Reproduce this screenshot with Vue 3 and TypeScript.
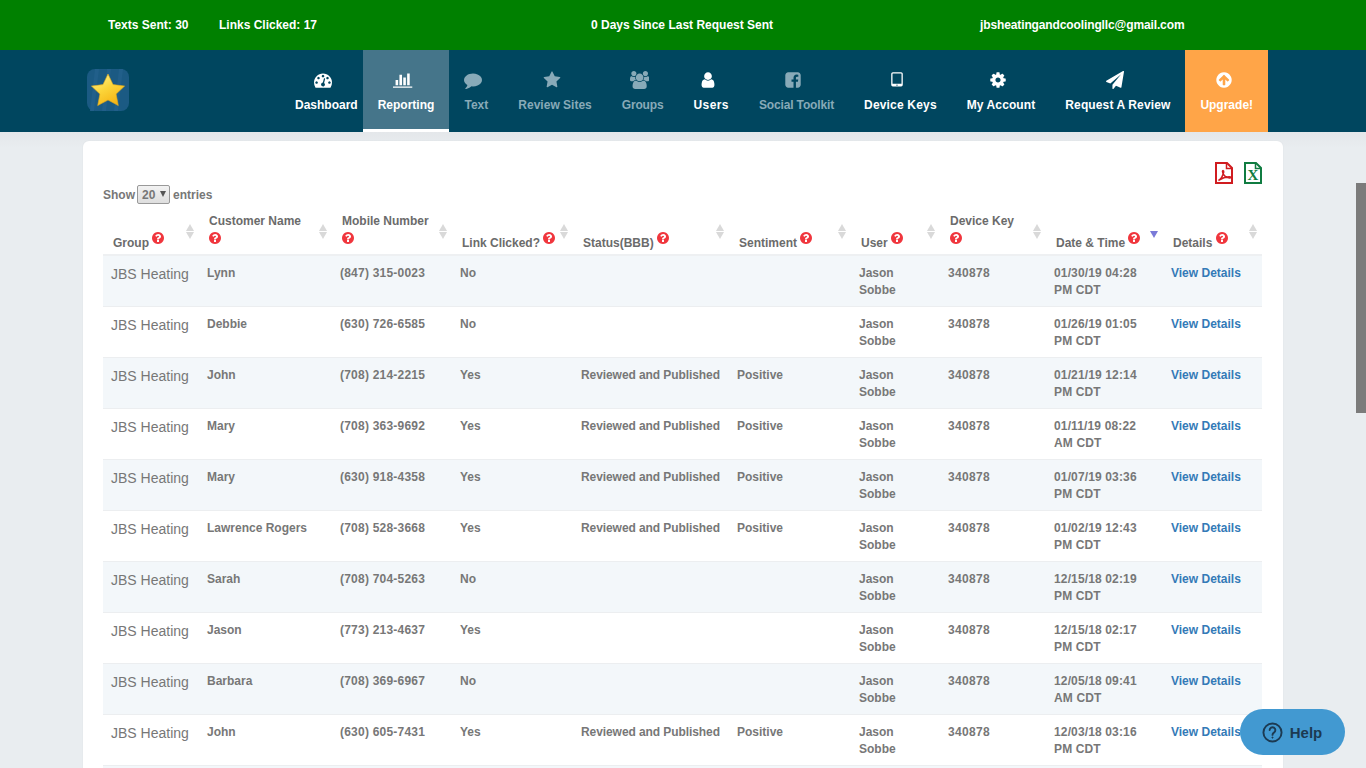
<script setup lang="ts">
interface NavItem { label: string; viewBox: string; d: string; dim?: boolean; active?: boolean; upgrade?: boolean; first?: boolean; track?: number }
const nav: NavItem[] = [
  { label: 'Dashboard', first: true, viewBox: '0 0 1792 1792', d: 'M384 1152q0-53-37.5-90.5t-90.5-37.5-90.5 37.5-37.5 90.5 37.5 90.5 90.5 37.5 90.5-37.5 37.5-90.5zm192-448q0-53-37.5-90.5t-90.5-37.5-90.5 37.5-37.5 90.5 37.5 90.5 90.5 37.5 90.5-37.5 37.5-90.5zm428 481l101-382q6-26-7.5-48.5t-38.5-29.5-48 6.5-30 39.5l-101 382q-60 5-107 43.5t-63 98.5q-20 77 20 146t117 89 146-20 89-117q16-60-6-117t-72-91zm660-33q0-53-37.5-90.5t-90.5-37.5-90.5 37.5-37.5 90.5 37.5 90.5 90.5 37.5 90.5-37.5 37.5-90.5zm-640-640q0-53-37.5-90.5t-90.5-37.5-90.5 37.5-37.5 90.5 37.5 90.5 90.5 37.5 90.5-37.5 37.5-90.5zm448 192q0-53-37.5-90.5t-90.5-37.5-90.5 37.5-37.5 90.5 37.5 90.5 90.5 37.5 90.5-37.5 37.5-90.5zm320 448q0 261-141 483-19 29-54 29h-1402q-35 0-54-29-141-221-141-483 0-182 71-348t191-286 286-191 348-71 348 71 286 191 191 286 71 348z' },
  { label: 'Reporting', active: true, viewBox: '0 0 2048 1792', d: 'M512 896v512h-256v-512h256zm384-512v1024h-256v-1024h256zm1024 1152v128h-2048v-1536h128v1408h1920zm-640-896v768h-256v-768h256zm384-384v1152h-256v-1152h256z' },
  { label: 'Text', dim: true, viewBox: '0 0 1792 1792', d: 'M1792 896q0 174-120 321.5t-326 233-450 85.5q-70 0-145-8-198 175-460 242-49 14-114 22-17 2-30.5-9t-17.5-29v-1q-3-4-.5-12t2-10 4.5-9.5l6-9 7-8.5 8-9q7-8 31-34.5t34.5-38 31-39.5 32.5-51 27-59 26-76q-157-89-247.5-220t-90.5-281q0-130 71-248.5t191-204.5 286-136.5 348-50.5q244 0 450 85.5t326 233 120 321.5z' },
  { label: 'Review Sites', dim: true, viewBox: '0 0 1792 1792', d: 'M1728 647q0 22-26 48l-363 354 86 500q1 7 1 20 0 21-10.5 35.5t-30.5 14.5q-19 0-40-12l-449-236-449 236q-22 12-40 12-21 0-31.5-14.5t-10.5-35.5q0-6 2-20l86-500-364-354q-25-27-25-48 0-37 56-46l502-73 225-455q19-41 49-41t49 41l225 455 502 73q56 9 56 46z' },
  { label: 'Groups', track: -0.15, dim: true, viewBox: '0 0 1920 1792', d: 'M593 896q-162 5-265 128h-134q-82 0-138-40.5t-56-118.5q0-353 124-353 6 0 43.5 21t97.5 42.5 119 21.5q67 0 133-23-5 37-5 66 0 139 81 256zm1071 637q0 120-73 189.5t-194 69.5h-874q-121 0-194-69.5t-73-189.5q0-53 3.5-103.5t14-109 26.5-108.5 43-97.5 62-81 85.5-53.5 111.5-20q10 0 43 21.5t73 48 107 48 135 21.5 135-21.5 107-48 73-48 43-21.5q61 0 111.5 20t85.5 53.5 62 81 43 97.5 26.5 108.5 14 109 3.5 103.5zm-1024-1277q0 106-75 181t-181 75-181-75-75-181 75-181 181-75 181 75 75 181zm704 384q0 159-112.5 271.5t-271.5 112.5-271.5-112.5-112.5-271.5 112.5-271.5 271.5-112.5 271.5 112.5 112.5 271.5zm576 225q0 78-56 118.5t-138 40.5h-134q-103-123-265-128 81-117 81-256 0-29-5-66 66 23 133 23 59 0 119-21.5t97.5-42.5 43.5-21q124 0 124 353zm-128-609q0 106-75 181t-181 75-181-75-75-181 75-181 181-75 181 75 75 181z' },
  { label: 'Users', track: 0.4, viewBox: '0 0 1792 1792', d: 'M1536 1399q0 109-62.5 187t-150.5 78h-854q-88 0-150.5-78t-62.5-187q0-85 8.5-160.5t31.5-152 58.5-131 94-89 134.5-34.5q131 128 313 128t313-128q76 0 134.5 34.5t94 89 58.5 131 31.5 152 8.5 160.5zm-256-887q0 159-112.5 271.5t-271.5 112.5-271.5-112.5-112.5-271.5 112.5-271.5 271.5-112.5 271.5 112.5 112.5 271.5z' },
  { label: 'Social Toolkit', track: -0.14, dim: true, viewBox: '0 0 1792 1792', d: 'M1376 128q119 0 203.5 84.5t84.5 203.5v960q0 119-84.5 203.5t-203.5 84.5h-188v-595h199l30-232h-229v-148q0-56 23.5-84t91.5-28l122-1v-207q-63-9-178-9-136 0-217.5 80t-81.5 226v171h-200v232h200v595h-532q-119 0-203.5-84.5t-84.5-203.5v-960q0-119 84.5-203.5t203.5-84.5h960z' },
  { label: 'Device Keys', track: 0.18, viewBox: '0 0 1792 1792', d: 'M960 1408q0-26-19-45t-45-19-45 19-19 45 19 45 45 19 45-19 19-45zm384-160v-960q0-13-9.5-22.5t-22.5-9.5h-832q-13 0-22.5 9.5t-9.5 22.5v960q0 13 9.5 22.5t22.5 9.5h832q13 0 22.5-9.5t9.5-22.5zm128-960v1088q0 66-47 113t-113 47h-832q-66 0-113-47t-47-113v-1088q0-66 47-113t113-47h832q66 0 113 47t47 113z' },
  { label: 'My Account', track: 0.1, viewBox: '0 0 1792 1792', d: 'M1152 896q0-106-75-181t-181-75-181 75-75 181 75 181 181 75 181-75 75-181zm512-109v222q0 12-8 23t-20 13l-185 28q-19 54-39 91 35 50 107 138 10 12 10 25t-9 23q-27 37-99 108t-94 71q-12 0-26-9l-138-108q-44 23-91 38-16 136-29 186-7 28-36 28h-222q-14 0-24.5-8.5t-11.5-21.5l-28-184q-49-16-90-37l-141 107q-10 9-25 9-14 0-25-11-126-114-165-168-7-10-7-23 0-12 8-23 15-21 51-66.5t54-70.5q-27-50-41-99l-183-27q-13-2-21-12.5t-8-23.5v-222q0-12 8-23t19-13l186-28q14-46 39-92-40-57-107-138-10-12-10-24 0-10 9-23 26-36 98.5-107.5t94.5-71.5q13 0 26 10l138 107q44-23 91-38 16-136 29-186 7-28 36-28h222q14 0 24.5 8.5t11.5 21.5l28 184q49 16 90 37l142-107q9-9 24-9 13 0 25 10 129 119 165 170 7 8 7 22 0 12-8 23-15 21-51 66.5t-54 70.5q26 50 41 98l183 28q13 2 21 12.5t8 23.5z' },
  { label: 'Request A Review', track: 0.12, viewBox: '0 0 1792 1792', d: 'M1764 11q33 24 27 64l-256 1536q-5 29-32 45-14 8-31 8-11 0-24-5l-453-185-242 295q-18 23-49 23-13 0-22-4-19-7-30.5-23.5t-11.5-36.5v-349l864-1059-1069 925-395-162q-37-14-40-55-2-40 32-59l1664-960q15-9 32-9 20 0 36 11z' },
  { label: 'Upgrade!', upgrade: true, viewBox: '0 0 1792 1792', d: 'M1412 895q0-27-18-45l-362-362-91-91q-18-18-45-18t-45 18l-91 91-362 362q-18 18-18 45t18 45l91 91q18 18 45 18t45-18l189-189v502q0 26 19 45t45 19h128q26 0 45-19t19-45v-502l189 189q19 19 45 19t45-19l91-91q18-18 18-45zm252 1q0 209-103 385.5t-279.5 279.5-385.5 103-385.5-103-279.5-279.5-103-385.5 103-385.5 279.5-279.5 385.5-103 385.5 103 279.5 279.5 103 385.5z' },
]
const qPath = 'M1024 1376v-192q0-14-9-23t-23-9h-192q-14 0-23 9t-9 23v192q0 14 9 23t23 9h192q14 0 23-9t9-23zm256-672q0-88-55.5-163t-138.5-116-170-41q-243 0-371 213-15 24 8 42l132 100q7 6 19 6 16 0 25-12 53-68 86-92 34-24 86-24 48 0 85.5 26t37.5 59q0 38-20 61t-68 45q-63 28-115.5 86.5t-52.5 125.5v36q0 14 9 23t23 9h192q14 0 23-9t9-23q0-19 21.5-49.5t54.5-49.5q32-18 49-28.5t46-35 44.5-48 28-60.5 12.5-81zm384 192q0 209-103 385.5t-279.5 279.5-385.5 103-385.5-103-279.5-279.5-103-385.5 103-385.5 279.5-279.5 385.5-103 385.5 103 279.5 279.5 103 385.5z'
const columns = [
  { label: 'Group', w: 96 },
  { label: 'Customer Name', w: 133, wrap: true },
  { label: 'Mobile Number', w: 120, wrap: true },
  { label: 'Link Clicked?', w: 121 },
  { label: 'Status(BBB)', w: 156 },
  { label: 'Sentiment', w: 122 },
  { label: 'User', w: 89 },
  { label: 'Device Key', w: 106, wrap: true },
  { label: 'Date & Time', w: 117, sorted: true },
  { label: 'Details', w: 99 },
]
const RP = 'Reviewed and Published'
const rows = [
  ['Lynn', '(847) 315-0023', 'No', '', '', '01/30/19 04:28 PM CDT'],
  ['Debbie', '(630) 726-6585', 'No', '', '', '01/26/19 01:05 PM CDT'],
  ['John', '(708) 214-2215', 'Yes', RP, 'Positive', '01/21/19 12:14 PM CDT'],
  ['Mary', '(708) 363-9692', 'Yes', RP, 'Positive', '01/11/19 08:22 AM CDT'],
  ['Mary', '(630) 918-4358', 'Yes', RP, 'Positive', '01/07/19 03:36 PM CDT'],
  ['Lawrence Rogers', '(708) 528-3668', 'Yes', RP, 'Positive', '01/02/19 12:43 PM CDT'],
  ['Sarah', '(708) 704-5263', 'No', '', '', '12/15/18 02:19 PM CDT'],
  ['Jason', '(773) 213-4637', 'Yes', '', '', '12/15/18 02:17 PM CDT'],
  ['Barbara', '(708) 369-6967', 'No', '', '', '12/05/18 09:41 AM CDT'],
  ['John', '(630) 605-7431', 'Yes', RP, 'Positive', '12/03/18 03:16 PM CDT'],
]
</script>

<template>
  <div class="page">
    <header class="stats">
      <div class="stats-left"><span>Texts Sent: 30</span><span class="links">Links Clicked: 17</span></div>
      <div>0 Days Since Last Request Sent</div>
      <div class="email">jbsheatingandcoolingllc@gmail.com</div>
    </header>

    <nav class="nav">
      <div class="logo">
        <svg width="42" height="42" viewBox="0 0 42 42">
          <defs>
            <linearGradient id="starFill" x1="0.2" y1="0" x2="0.75" y2="1">
              <stop offset="0" stop-color="#fff08a" />
              <stop offset="0.45" stop-color="#fbd53a" />
              <stop offset="1" stop-color="#f5b010" />
            </linearGradient>
          </defs>
          <rect width="42" height="42" rx="8" fill="#1b5a83" />
          <path d="M8 0l-5 42h4L12 0zM20 0l-5 42h4L24 0zM32 0l-5 42h4L36 0z" fill="#215f8a" />
          <path d="M21 5l5 10.600 11.600 1.500-8.500 8 2.200 11.500L21 31l-10.300 5.600 2.200-11.500-8.500-8L16 15.600z" fill="url(#starFill)" stroke="#e2a91a" stroke-width=".6" stroke-linejoin="round" />
        </svg>
      </div>
      <ul class="menu">
        <li v-for="n in nav" :key="n.label" class="item" :class="{ dim: n.dim, active: n.active, upgrade: n.upgrade, first: n.first }">
          <svg class="nav-icon" :viewBox="n.viewBox"><path :d="n.d" fill="currentColor" /></svg>
          <span :style="n.track ? { letterSpacing: n.track + 'px' } : undefined">{{ n.label }}</span>
        </li>
      </ul>
    </nav>

    <main class="main">
      <section class="card">
        <div class="exports">
          <svg class="file" width="18" height="22" viewBox="0 0 18 22">
            <path d="M1 1h11l5 5v15H1z" fill="#fff" stroke="#d01c20" stroke-width="2" />
            <path d="M11.500 1v5.500H17" fill="none" stroke="#d01c20" stroke-width="1.500" />
            <path d="M3.500 18.500c2.500-1.500 4.500-5 5.200-8.500.3-1.500-1.200-2-1.200-.4 0 3 3.200 6 7 6.400 1.400.1 1.400-1.200 0-1.200-3.200 0-7.500 1.300-11 3.700z" fill="none" stroke="#d01c20" stroke-width="1.500" />
          </svg>
          <svg class="file" width="18" height="22" viewBox="0 0 18 22">
            <path d="M1 1h11l5 5v15H1z" fill="#fff" stroke="#107c41" stroke-width="2" />
            <path d="M11.500 1v5.500H17" fill="none" stroke="#107c41" stroke-width="1.500" />
            <text x="9" y="18" text-anchor="middle" class="xl">X</text>
          </svg>
        </div>
        <div class="length">
          <span class="show">Show</span>
          <span class="picker-wrap"><select class="picker"><option>20</option></select></span>
          <span>entries</span>
        </div>
        <table class="grid">
          <colgroup><col v-for="c in columns" :key="c.label" :style="{ width: c.w + 'px' }" /></colgroup>
          <thead>
            <tr>
              <th v-for="c in columns" :key="c.label">
                {{ c.label + ' ' }}<br v-if="c.wrap" />
                <svg class="q" viewBox="128 128 1536 1536"><path :d="qPath" fill="#f0363d" /></svg>
                <span v-if="c.sorted" class="sort-active"></span>
                <span v-else class="sort"></span>
              </th>
            </tr>
          </thead>
          <tbody>
            <tr v-for="(r, i) in rows" :key="i">
              <td class="group">JBS Heating</td>
              <td>{{ r[0] }}</td>
              <td class="phone">{{ r[1] }}</td>
              <td>{{ r[2] }}</td>
              <td class="status">{{ r[3] }}</td>
              <td>{{ r[4] }}</td>
              <td>Jason Sobbe</td>
              <td class="key">340878</td>
              <td class="date">{{ r[5] }}</td>
              <td><a class="details">View Details</a></td>
            </tr>
            <tr class="more"><td colspan="10"></td></tr>
          </tbody>
        </table>
      </section>
    </main>

    <div class="thumb"></div>
    <button class="help">
      <svg width="21" height="21" viewBox="0 0 22 22" fill="none" stroke="#1c3a52" stroke-width="2">
        <circle cx="11" cy="11" r="9.500" />
        <path d="M8 8.500a3 3 0 1 1 4.500 2.600c-1 .6-1.500 1.200-1.500 2.400" stroke-linecap="round" />
        <circle cx="11" cy="16.300" r=".6" fill="#1c3a52" stroke-width="1" />
      </svg>
      <span>Help</span>
    </button>
  </div>
</template>

<style>
html, body { margin: 0; height: 768px; overflow: hidden; background: #e9edf0; }
</style>

<style scoped>
.page { height: 768px; overflow: hidden; font-family: "Liberation Sans", Arial, sans-serif; font-size: 12px; font-weight: 700; color: #777; }
.stats { height: 50px; background: #008000; color: #fff; display: grid; grid-template-columns: 591px 389px 1fr; align-items: center; }
.stats-left { display: flex; gap: 31px; padding-left: 108px; }
.links { margin-left: -.5px; }
.email { letter-spacing: -.12px; }
.nav { height: 82px; background: #00465f; display: flex; }
.logo { padding: 19px 0 0 87px; width: 280px; box-sizing: border-box; }
.logo svg { display: block; }
.menu { list-style: none; margin: 0; padding: 0; display: flex; }
.item { box-sizing: border-box; height: 82px; padding: 21px 15px 0; color: #fff; display: flex; flex-direction: column; align-items: center; white-space: nowrap; }
.item.first { padding-right: 5px; }
.item.dim { color: #88aab8; }
.item.active { background: #45758a; border-bottom: 3px solid #fff; }
.item.upgrade { background: #ffa548; }
.nav-icon { display: block; height: 18px; width: auto; margin-right: 6px; margin-bottom: 9px; }
.main { padding: 9px 83px 0; background: linear-gradient(#e4e7ea, #e9edf0 16px); height: 636px; box-sizing: border-box; }
.card { background: #fff; border-radius: 6px; padding: 21px 21px 0 20px; box-shadow: 0 0 2px rgba(0, 0, 0, .05); }
.exports { display: flex; justify-content: flex-end; gap: 11px; height: 23px; }
.file { display: block; }
.xl { font: 700 15px "Liberation Serif", serif; fill: #107c41; }
.length { height: 19px; display: flex; align-items: center; gap: 3px; }
.show { width: 31px; }
.picker-wrap { position: relative; display: block; width: 33px; height: 19px; }
.picker-wrap::after { content: ""; position: absolute; right: 4px; top: 6px; border: 3.5px solid transparent; border-top: 6px solid #555; border-bottom: 0; pointer-events: none; }
.picker { appearance: none; display: block; box-sizing: border-box; font: 700 12px "Liberation Sans", Arial, sans-serif; color: #777; width: 33px; height: 19px; padding: 0 0 0 4px; margin: 0; border: 1px solid #999; border-radius: 2px; background: linear-gradient(#f2f2f2, #dedede); }
.grid { width: 1159px; table-layout: fixed; border-collapse: collapse; margin-top: 2px; }
th { position: relative; box-sizing: border-box; height: 49px; text-align: left; vertical-align: bottom; padding: 0 10px 2.5px; line-height: 17px; color: #6b6b6b; border-bottom: 2px solid #eef0f2; }
.q { width: 12px; height: 12px; vertical-align: 3px; margin: 2px 0 0; }
.sort, .sort-active { position: absolute; right: 5px; top: 18px; width: 8px; height: 15px; }
.sort::before, .sort::after, .sort-active::before { content: ""; position: absolute; left: 0; border-left: 4px solid transparent; border-right: 4px solid transparent; }
.sort::before { top: 0; border-bottom: 7px solid #d9d9d9; }
.sort::after { top: 8px; border-top: 7px solid #d9d9d9; }
.sort-active { top: 25px; }
.sort-active::before { top: 0; border-top: 7px solid #7a7ad8; }
td { padding: 9px 8px 6px; line-height: 17px; height: 51px; box-sizing: border-box; vertical-align: top; border-bottom: 1px solid #eceef0; }
tbody tr:nth-child(odd) td { background: #f3f7fa; }
.group { font-size: 14px; font-weight: 400; padding-top: 10px; }
.phone { letter-spacing: .22px; }
.key { letter-spacing: .33px; }
.date { letter-spacing: .14px; }
.status { white-space: nowrap; letter-spacing: -.08px; }
.details { color: #337ab7; }
.thumb { position: fixed; right: 0; top: 183px; width: 10px; height: 230px; background: #7b7b7b; }
.help { position: fixed; left: 1240px; top: 709px; width: 105px; height: 46px; border: 0; border-radius: 23px; background: #4299d1; color: #1c3a52; display: flex; align-items: center; justify-content: center; gap: 7px; font: 700 15px "Liberation Sans", Arial, sans-serif; padding: 0 1px 0 0; }
</style>
